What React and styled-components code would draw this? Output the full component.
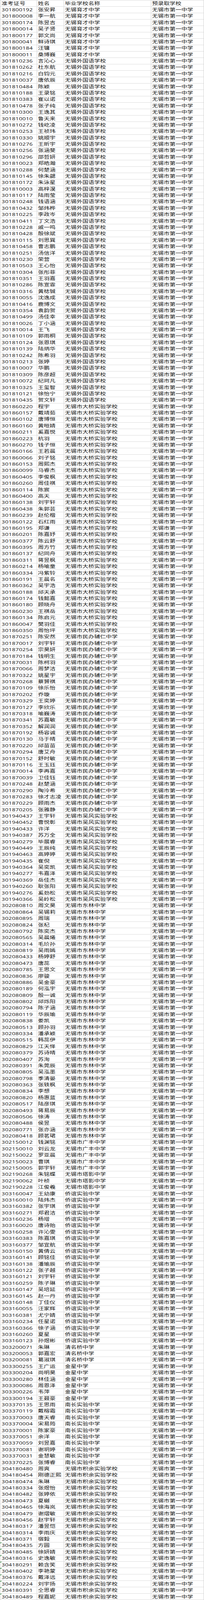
import React from 'react';
import styled, { createGlobalStyle } from 'styled-components';

const GlobalStyle = createGlobalStyle`
  html, body { margin: 0; padding: 0; background: #ffffff; }
  body { font-family: "Open Sans", "Noto Sans CJK SC", sans-serif; }
`;

const SHEET_H = 5501;
const VIEW_H = 4096;
const FIT = VIEW_H / SHEET_H;

const TARGET = '无锡市第一中学';

// 毕业学校 -> 名单（! 开头的行带有“文本格式数字”绿色角标）
const groups = [
  {
    school: '无锡育才中学',
    rows: `301800192 张安昇
301800008 李一航
301800174 陈昱吉
301800014 吴子贤
301800177 郭文尚
301800041 鲜诗琪
301800184 汪镛
301800011 桑博巍`,
  },
  {
    school: '无锡外国语学校',
    rows: `301810236 言沁心
301810262 杜东航
301810216 白钧元
301810037 唐依辰
301810484 陈颖
301810188 王录铭
301810383 崔以诺
301810478 张子纯
301810300 王逸其
301810010 鲁天来
301810272 钱屹凌
301810253 王祯玮
301810330 姚顺宇
301810276 王昕宇
301810256 张涵斐
301810296 邵哲妍
301810023 郑皓瀚
301810288 何楚涵
301810145 徐朱勰
301810172 朱泳星
301810003 高梓淏
301810117 陆雨莹
301810248 钱语涵
301810432 邹炜桦
301810225 李政岑
301810411 丁文浩
301810228 戚一鸣
301810428 殷徐斌
301810115 刘思巽
301810458 曹志鹏
301810251 汤信洋
301810230 荣营
301810503 王心怡
301810304 张彤菲
301810351 王羽嘉
301810286 陈宣霏
301810316 黄梽铖
301810055 沈逸成
301810416 鹿博文
301810354 袁韵贺
301810499 汤佳幸
301810026 丁小涵
301810014 王飞
301810109 郭雨桐
301810124 张恩琪
301810139 陆炳华
301810242 陈希羽
301810213 张婷
301810007 华鹏
301810309 陈彦超
301810072 纪珂凡
301810325 王玺智
301810121 徐怡宁
301810435 贺文轩`,
  },
  {
    school: '无锡市大桥实验学校',
    rows: `301860220 程宇
301860157 戴靖茹
301860102 唐博恒
301860160 黄晅婧
301860211 奚嘉悦
301860223 杭羽
301860270 钱子恒
301860166 王若晨
301860066 刘子铭
301860153 周熙杰
301860099 马睿杰
301860405 李俊枫
301860260 周佳祺
301860114 陈宸
301860400 高天
301860138 刘宇轩
301860438 朱郭芸
301860239 赵伦楷
301860122 石红雨
301860195 郑谦
301860201 陈嘉妤
301860377 陈云舒
301860395 周方竹
301860137 纪同舟
301860311 蒋昱枫
301860214 杨喻童
301860334 冯紫铃
301860191 王晨名
301860362 吴宇浩
301860188 邱天承
301860174 钱懿嘉
301860180 顾晓舟
301860230 王祺岳
301860134 陈启元
301860047 樊羽佳
301860350 周怡坪`,
  },
  {
    school: '无锡市民办辅仁中学',
    rows: `301870251 陈安然
301870017 刘宇轩
301870254 宗昊妍
301870184 钱明生
301870031 陈柯羽
301870066 周梦洁
301870322 姚星宇
301870268 蔡贇祺
301870109 徐乐怡
301870202 乔璇
301870329 王奕婷
301870127 李欣乐
301870318 喻巍涛
301870341 苏嘉敏
301870352 解润润
301870192 杨容诚
301870130 马于晴
301870220 邱苗苗
301870294 唐艾舟
301870152 舒时敏
301870116 王玉珏
301870014 李再嘉
301870039 卫佳钰
301870248 赵楚涵
301870290 陶泠希
301870283 徐才志凌
301870229 顾雨杰
301870205 张雅静`,
  },
  {
    school: '无锡市吴风实验学校',
    rows: `301940437 王宇轩
301940452 曹悦彰
301940433 许洋
301940387 苏万全
301940279 毕展睿
301940449 王辰纯
301940463 高婷婷
301940435 崔倪
301940364 吴奕凯
301940277 韦嘉泽
301940369 岳佳杰
301940260 耿张阳
301940276 奚劲松
301940366 吴岭松`,
  },
  {
    school: '无锡市东林中学',
    rows: `302080810 周文昊
302080864 吴锡莉
302080895 周瑞
302080824 张杞
302080792 陈奕杰
302080565 吴晨爔
302080314 毛玠孙
302080819 吴雨嫣
302080433 杨婷舒
302080473 唐蕊
302080785 王思文
302080836 廖骏
302080886 吴金豪
302080189 何泓宇
302080809 殷一诚
302080802 邱烁阳
302080794 陈子涵
302080119 华辰瑜
302080838 娄凯
302080513 顾孙羽
302080334 潘承颖
302080515 韩蕊伊
302080829 江天怿
302080379 苏诗晴
302080407 苏洵
302080391 朱莞辰
302080805 吴泓墨
302080798 季清晏
302080363 张轶枫
302080834 李想
302080820 杨惠蓝
302080517 陆彦琪
302080493 蒋易辰
302080506 徐涛
302080488 侯昱
302080771 张亦涵
302080418 顾茗珺`,
  },
  {
    school: '无锡市广丰中学',
    rows: `302150012 钱渊铭
302150010 刘云龙
302150022 罗亚晨
302150023 曹琪
302150005 郭宇轩`,
  },
  {
    school: '无锡市塔影中学',
    rows: `302190268 朱铭蝶
302190062 叶桢
302190228 江俊羲`,
  },
  {
    school: '侨谊实验中学',
    rows: `303160047 王幼康
303160010 陆炜杰
303160382 张宇琪
303160271 郑君洁
303160236 杨增
303160020 唐诗贻
303160258 许沁雯
303160383 陈嘉琪
303160377 邹宜航
303160150 黄倩云
303160141 顾铭佳
303160138 潘瑜辰
303160122 张子越
303160121 刘宇轩
303160259 陈子琳
303160147 吴培延
303160145 赵一丹
303160148 丁佳仪
303160055 汪家辉
303160381 尤宁婧
303160234 任星诺
303160366 徐子涵
303160260 夏星
303160123 孙煜彬`,
  },
  {
    school: '清名桥中学',
    rows: `303200071 朱琳
303200053 郭嘉宏
303200081 葛淑琪`,
  },
  {
    school: '金星中学',
    rows: `303300255 王广运
303300204 尚明昊
303300280 林佳涵
303300086 周恩泽
303300226 韦萍
303300194 王聂豪`,
  },
  {
    school: '南长实验中学',
    rows: `303370135 王思雨
303370119 戴榕霜
303370003 唐天睿
303370004 宋易筠
303370001 陈家豪
303370051 余洋
303370059 刘昱嘉
303370081 谢玥婷
303370031 金慧敏
303370225 张博睿`,
  },
  {
    school: '无锡市积余实验学校',
    rows: `304180480 周爽
304180454 刚德正熙
304180474 朱琳
304180334 张煜怡
304180482 张婷依
304180473 夏樾
304180465 徐海岚
304180479 谢熠敏
304180456 赵宇轩
304180317 潘昱恺
304180314 李雨庆
!304180371 宿毅
!304180435 方圆
!304180485 徐妍婧
!304180316 史逸敏
!304180291 赖含笑
!304180402 李艳蒙
!304180376 戴泽远
!304180224 刘宇扬
!304180391 仝思睿
!304180489 程嘉妮`,
  },
];

const students = groups.flatMap((g) =>
  g.rows.split('\n').map((line) => {
    const flagged = line.startsWith('!');
    const [id, name] = line.replace('!', '').trim().split(' ');
    return { id, name, school: g.school, flagged };
  })
);

const App = () => (
  <>
    <GlobalStyle />
    <Viewport>
      <Sheet>
        <Row>
          <IdCell>准考证号</IdCell>
          <Cell>姓名</Cell>
          <Cell>毕业学校名称</Cell>
          <Cell>预录取学校</Cell>
        </Row>
        {students.map((s) => (
          <Row key={s.id + s.name}>
            <IdCell $flagged={s.flagged}>{s.id}</IdCell>
            <Cell>{s.name}</Cell>
            <Cell>{s.school}</Cell>
            <Cell>{TARGET}</Cell>
          </Row>
        ))}
      </Sheet>
    </Viewport>
  </>
);

const Viewport = styled.div`
  width: 522px;
  height: ${VIEW_H}px;
  overflow: hidden;
`;

const Sheet = styled.div`
  width: 522px;
  height: ${SHEET_H}px;
  box-sizing: border-box;
  border-top: 1px solid #cfcfcf;
  border-left: 1px solid #cfcfcf;
  background: #ffffff;
  color: #111111;
  font-size: 15px;
  transform: scaleY(${FIT});
  transform-origin: 0 0;
`;

const Row = styled.div`
  display: grid;
  grid-template-columns: 94px 69px 223px 135px;
  height: 22px;
`;

const Cell = styled.div`
  position: relative;
  box-sizing: border-box;
  height: 22px;
  border-right: 1px solid #cfcfcf;
  border-bottom: 1px solid #cfcfcf;
  padding-left: 2px;
  line-height: 21px;
  white-space: nowrap;
  overflow: hidden;
`;

const IdCell = styled(Cell)`
  padding-left: 3px;
  letter-spacing: 0.3px;
  &::before {
    content: '';
    display: ${(p) => (p.$flagged ? 'block' : 'none')};
    position: absolute;
    top: 0;
    left: 0;
    width: 0;
    height: 0;
    border-top: 4px solid #2e8b3c;
    border-right: 4px solid transparent;
  }
`;

export default App;
